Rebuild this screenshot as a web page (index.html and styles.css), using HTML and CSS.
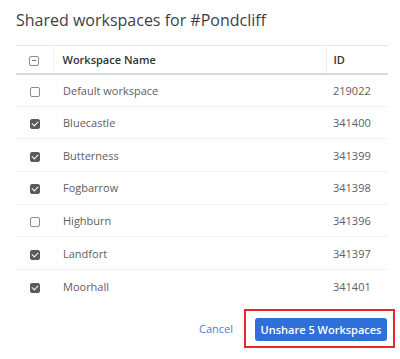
FILE: index.html
```html
<!DOCTYPE html>
<html lang="en">
<head>
  <meta charset="UTF-8" />
  <title>Shared workspaces</title>
  <link rel="stylesheet" href="styles.css">
</head>
<body>
  <div class="dialog">
    <h2>Shared workspaces for #Pondcliff</h2>

    <table class="ws-table">
      <thead>
        <tr>
          <th class="col-check"><span class="box partial"></span></th>
          <th class="col-name">Workspace Name</th>
          <th class="col-id">ID</th>
        </tr>
      </thead>
      <tbody>
        <tr><td class="col-check"><span class="box"></span></td><td>Default workspace</td><td>219022</td></tr>
        <tr><td class="col-check"><span class="box checked"></span></td><td>Bluecastle</td><td>341400</td></tr>
        <tr><td class="col-check"><span class="box checked"></span></td><td>Butterness</td><td>341399</td></tr>
        <tr><td class="col-check"><span class="box checked"></span></td><td>Fogbarrow</td><td>341398</td></tr>
        <tr><td class="col-check"><span class="box"></span></td><td>Highburn</td><td>341396</td></tr>
        <tr><td class="col-check"><span class="box checked"></span></td><td>Landfort</td><td>341397</td></tr>
        <tr class="last"><td class="col-check"><span class="box checked"></span></td><td>Moorhall</td><td>341401</td></tr>
      </tbody>
    </table>

    <div class="footer">
      <a class="cancel" href="#">Cancel</a>
      <div class="highlight">
        <button class="primary">Unshare 5 Workspaces</button>
      </div>
    </div>
  </div>
</body>
</html>
```

FILE: styles.css
```css
* {
  box-sizing: border-box;
  margin: 0;
  padding: 0;
}
body {
  width: 400px;
  height: 359px;
  background: #fff;
  font-family: 'Open Sans', 'Noto Sans', sans-serif;
  color: #555;
  overflow: hidden;
}
.dialog {
  padding: 8px 5px 0 16px;
}
h2 {
  font-size: 16px;
  font-weight: 400;
  line-height: 24px;
  color: #3c3f47;
  margin-bottom: 13px;
}
.ws-table {
  width: 372px;
  border-collapse: collapse;
  font-size: 11px;
}
.ws-table th {
  height: 28px;
  text-align: left;
  font-weight: 600;
  color: #333;
  border-top: 1px solid #e2e6ee;
  border-bottom: 2px solid #d5dbe6;
  border-right: 1px solid #eceff4;
  padding: 0 0 0 9px;
}
.ws-table th:last-child {
  border-right: none;
  padding-left: 7px;
}
.ws-table th.col-check,
.ws-table td.col-check {
  width: 37px;
  padding: 0;
  text-align: center;
}
.ws-table th.col-id {
  width: 62px;
}
.ws-table td {
  height: 32.7px;
  padding: 0 0 0 10px;
  border-bottom: 1px solid #f1f2f5;
  color: #5e5e5e;
}
.ws-table td:last-child {
  padding-left: 7px;
}
.ws-table tr.last td {
  border-bottom: none;
}
.box {
  display: inline-block;
  width: 10px;
  height: 10px;
  border: 1px solid #8d8d8d;
  border-radius: 2px;
  vertical-align: middle;
  position: relative;
  background: #fff;
}
.box.checked {
  background: #5a5a5a;
  border-color: #5a5a5a;
}
.box.checked::after {
  content: "";
  position: absolute;
  left: 2.5px;
  top: 0;
  width: 3px;
  height: 5px;
  border: solid #fff;
  border-width: 0 1.5px 1.5px 0;
  transform: rotate(45deg);
}
.box.partial::after {
  content: "";
  position: absolute;
  left: 2px;
  top: 3.5px;
  width: 4px;
  height: 1px;
  background: #777;
}
.footer {
  display: flex;
  justify-content: flex-end;
  align-items: center;
  margin-top: 7px;
}
.cancel {
  font-size: 11px;
  color: #4a7dd6;
  text-decoration: none;
  margin-right: 11px;
}
.highlight {
  border: 2px solid #e8262c;
  padding: 7px 6px 5px 9px;
}
.primary {
  display: block;
  width: 132px;
  height: 23px;
  border: none;
  border-radius: 3px;
  background: #2f6fd9;
  color: #fff;
  font-family: 'Open Sans', 'Noto Sans', sans-serif;
  font-size: 11px;
  font-weight: 600;
}
```
